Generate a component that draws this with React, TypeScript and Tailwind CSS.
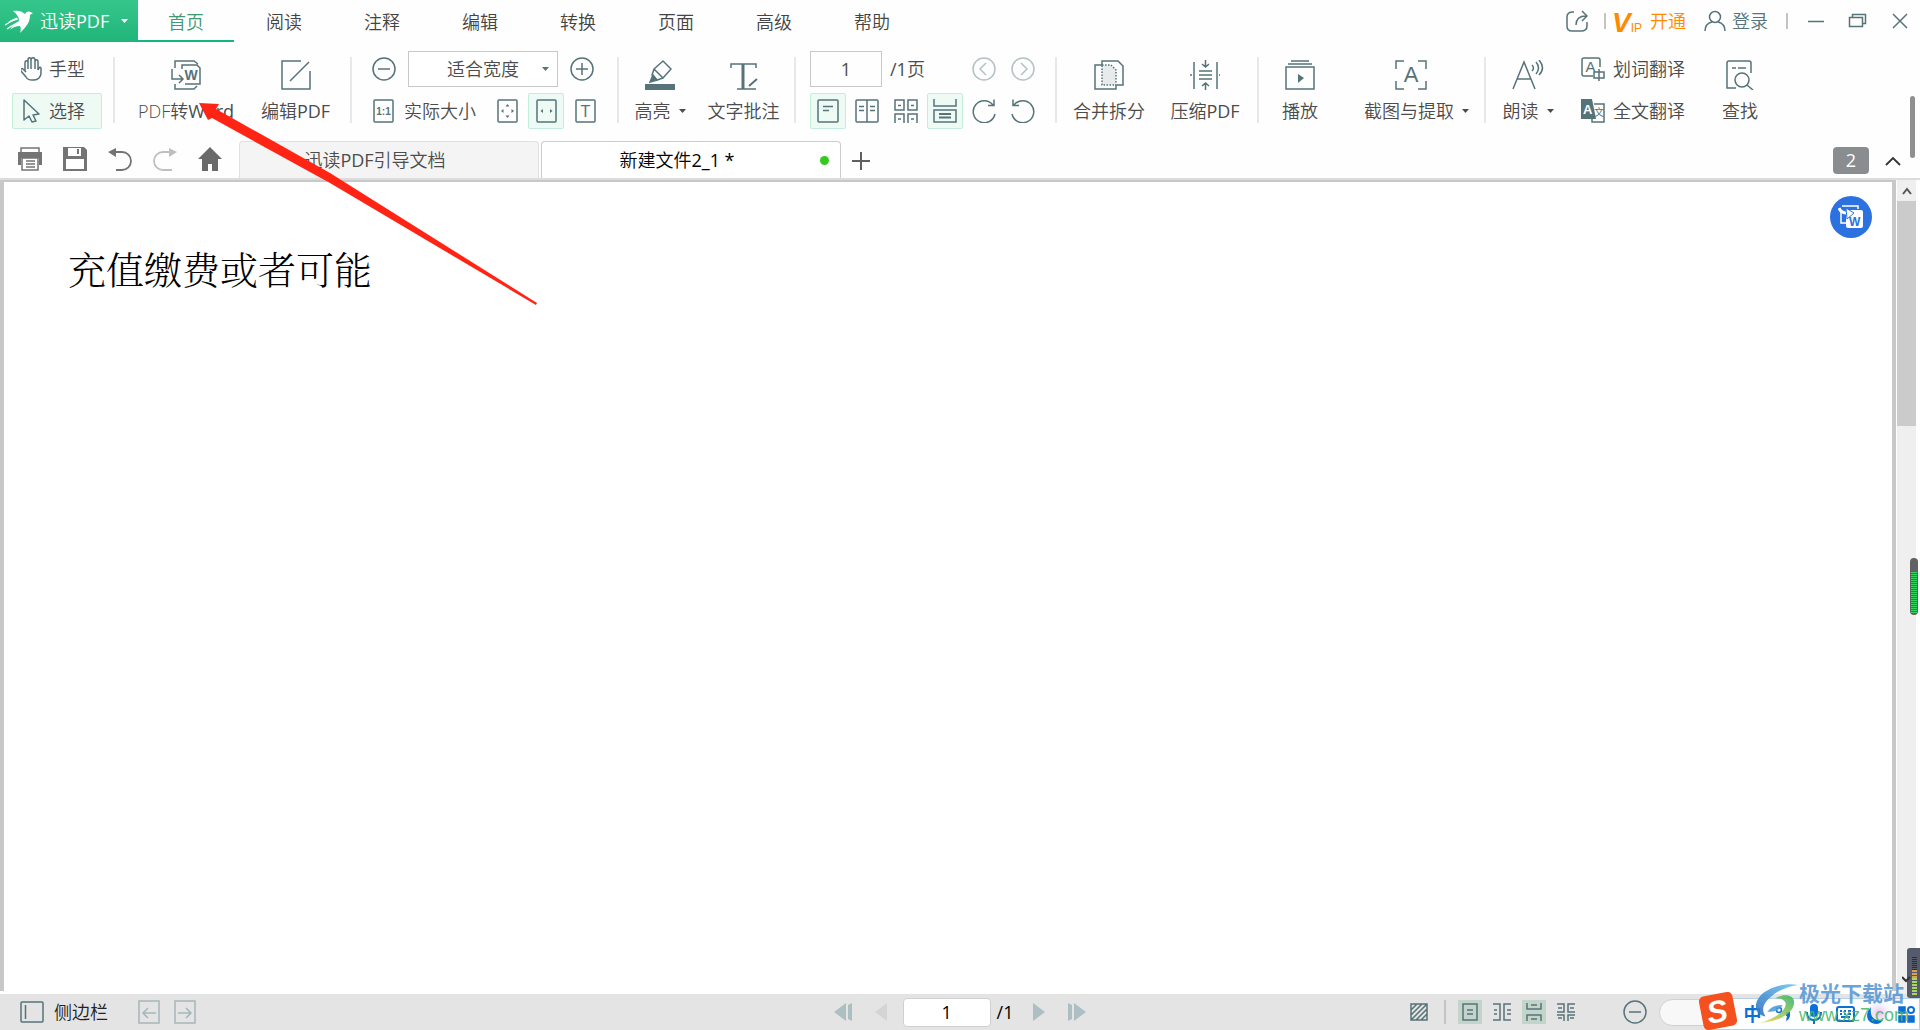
import React from 'react';
import clsx from 'clsx';

type IconProps = { w: number; h: number; className?: string; children: React.ReactNode };

const Icon = ({ w, h, className, children }: IconProps) => (
  <svg
    width={w}
    height={h}
    viewBox={`0 0 ${w} ${h}`}
    fill="none"
    stroke="currentColor"
    strokeWidth="1.5"
    className={clsx('shrink-0', className ?? 'text-[#56737a]')}
    aria-hidden="true"
  >
    {children}
  </svg>
);

type GlyphProps = { x: number; y: number; size: number; weight?: number; children: string };

// small letter inside an icon
const Glyph = ({ x, y, size, weight = 400, children }: GlyphProps) => (
  <text
    x={x}
    y={y}
    fontSize={size}
    fontWeight={weight}
    textAnchor="middle"
    fill="currentColor"
    stroke="none"
    fontFamily="'Liberation Sans', 'Noto Sans CJK SC', sans-serif"
  >
    {children}
  </text>
);

const Caret = () => (
  <svg width="7" height="4" viewBox="0 0 7 4" className="shrink-0" aria-hidden="true">
    <path d="M0 0h7L3.5 4z" fill="currentColor" />
  </svg>
);

// Latin runs need the regular weight to sit well beside the light CJK strokes
const Latin = ({ children }: { children: string }) => <span className="font-normal">{children}</span>;

const Separator = () => <div className="mt-[6px] h-[66px] w-[2px] shrink-0 bg-[#e8e8e8]" />;

const menuTabs = ['首页', '阅读', '注释', '编辑', '转换', '页面', '高级', '帮助'];

const TitleBar = () => (
  <header className="flex h-[42px] items-stretch">
    <button className="flex w-[138px] shrink-0 items-center bg-gradient-to-b from-[#35c68b] to-[#20b57a] pl-1 text-white">
      <svg width="30" height="24" viewBox="0 0 30 24" aria-hidden="true">
        <path
          d="M9 2c5-1 9 0 12 3 1-2 3-3 5-2l3 1-3 2c0 7-3 11-10 18 1-3 1-5 0-7-4 0-7 1-10 4 2-4 5-7 9-9 0-4-2-7-6-10z"
          fill="currentColor"
        />
        <path d="M1 16c5-3 8-5 13-6M3 20c4-3 6-4 10-6M5 13c3-2 5-3 8-4" stroke="currentColor" strokeWidth="1.2" fill="none" />
      </svg>
      <span className="ml-[6px]">迅读<Latin>PDF</Latin></span>
      <span className="ml-3">
        <Caret />
      </span>
    </button>
    <nav className="flex gap-[2px]">
      {menuTabs.map((tab, i) => (
        <button
          key={tab}
          className={clsx(
            'w-24 border-b-2 pt-1',
            i === 0 ? 'border-[#10b981] text-[#3f9a74]' : 'border-transparent text-[#444444]',
          )}
        >
          {tab}
        </button>
      ))}
    </nav>
    <div className="ml-auto flex items-center pr-3 text-[#56737a]">
      <button aria-label="分享" className="mr-4">
        <Icon w={22} h={22}>
          <path d="M8 2H7C3 2 1 4 1 7v9c0 3 2 5 5 5h9c4 0 6-2 6-5v-4" />
          <path d="M10 15c0-5 2-9 10-9M16 1l5 5-5 5" />
        </Icon>
      </button>
      <div className="h-4 w-[2px] bg-[#c4c4c4]" />
      <button className="ml-2 flex items-center gap-[10px] text-[#ff8a00]">
        <svg width="26" height="42" viewBox="0 0 26 42" fill="currentColor" className="overflow-visible" aria-hidden="true">
          <text x="-2" y="32" fontSize="28" fontWeight="700" fontStyle="italic" fontFamily="'Liberation Sans', sans-serif">
            V
            <tspan fontSize="12" fontStyle="normal" fontWeight="400">
              IP
            </tspan>
          </text>
        </svg>
        开通
      </button>
      <button className="ml-[18px] flex items-center gap-[6px]">
        <Icon w={22} h={22}>
          <circle cx="11" cy="7" r="5.5" />
          <path d="M1 21c0-5 3-8 7-9M21 21c0-5-3-8-7-9" />
        </Icon>
        登录
      </button>
      <div className="ml-[18px] h-4 w-[2px] bg-[#c4c4c4]" />
      <button aria-label="最小化" className="ml-5">
        <Icon w={16} h={18}>
          <path d="M0 9.5h16" />
        </Icon>
      </button>
      <button aria-label="还原" className="ml-6">
        <Icon w={20} h={18}>
          <path d="M1.500 5.500h13v9h-13zM4.500 5V2.500h13v9H15" />
        </Icon>
      </button>
      <button aria-label="关闭" className="ml-6">
        <Icon w={16} h={18}>
          <path d="M1 2l14 14M15 2L1 16" />
        </Icon>
      </button>
    </div>
  </header>
);

type BigButtonProps = { width: string; label: React.ReactNode; caret?: boolean; children: React.ReactNode };

const BigButton = ({ width, label, caret, children }: BigButtonProps) => (
  <button className={clsx('flex shrink-0 flex-col items-center gap-[9px] pt-[9px] whitespace-nowrap', width)}>
    {children}
    <span className="flex items-center gap-2 leading-6">
      <span>{label}</span>
      {caret && <Caret />}
    </span>
  </button>
);

type ToolProps = { label: string; active?: boolean; children: React.ReactNode };

const Tool = ({ label, active, children }: ToolProps) => (
  <button
    aria-label={label}
    className={clsx(
      'flex h-9 w-9 shrink-0 items-center justify-center rounded-xs border',
      active ? 'border-[#c5eddc] bg-[#edfbf4]' : 'border-transparent',
    )}
  >
    {children}
  </button>
);

const Ribbon = () => (
  <div className="flex h-[97px] shrink-0 items-start overflow-hidden pt-[9px] text-[#4c4c4c]">
    <div className="flex flex-col gap-[6px] pr-[11px] pl-3">
      <button className="flex h-9 w-[90px] items-center gap-[6px] border border-transparent pl-2">
        <Icon w={22} h={24}>
          <path d="M4 14V6c0-3 3-3 3 0v6V3c0-3 3-3 3 0v9V3c0-3 4-3 4 0v9V5c0-3 3-3 3 0v8c1-3 3-4 3-1v4c0 4-3 7-7 7h-2c-3 0-5-1-6-3l-5-6c-1-2 1-3 2-2l3 3" />
        </Icon>
        手型
      </button>
      <button className="flex h-9 w-[90px] items-center gap-[6px] rounded-xs border border-[#c5eddc] bg-[#edfbf4] pl-2">
        <Icon w={22} h={24}>
          <path d="M3 1l15 14-6 1 3 6-4 1-3-6-5 4z" strokeLinejoin="round" />
        </Icon>
        选择
      </button>
    </div>
    <Separator />

    <div className="flex px-2">
      <BigButton width="w-[126px]" label={<>PDF转<Latin>Word</Latin></>}>
        <Icon w={30} h={30}>
          <path d="M4 8V1h19l4 3M4 24v5h19l3-3M11 9V5h15l3 3v16H14M1 9v10h10M8 15l4 4-4 4" />
          <Glyph x={20} y={20} size={14} weight={700}>W</Glyph>
        </Icon>
      </BigButton>
      <BigButton width="w-[93px]" label={<>编辑<Latin>PDF</Latin></>}>
        <Icon w={30} h={30}>
          <path d="M20 1H1v28h28V11M9 21L28 2" />
        </Icon>
      </BigButton>
    </div>
    <Separator />

    <div className="flex flex-col gap-[6px] px-[14px]">
      <div className="flex gap-[6px]">
        <Tool label="缩小">
          <Icon w={24} h={24}>
            <circle cx="12" cy="12" r="11" />
            <path d="M6 12h12" />
          </Icon>
        </Tool>
        <div className="relative">
          <select aria-label="缩放" className="h-9 w-[150px] appearance-none border border-[#c8c8c8] bg-white text-center [text-align-last:center]">
            <option>适合宽度</option>
          </select>
          <span className="pointer-events-none absolute top-4 right-[9px] text-[#56737a]">
            <Caret />
          </span>
        </div>
        <Tool label="放大">
          <Icon w={24} h={24}>
            <circle cx="12" cy="12" r="11" />
            <path d="M6 12h12M12 6v12" />
          </Icon>
        </Tool>
      </div>
      <div className="flex gap-[3px]">
        <button className="flex h-9 w-[120px] items-center gap-[10px] pl-[7px] whitespace-nowrap">
          <Icon w={21} h={24}>
            <rect x="1" y="1" width="19" height="22" rx="1" />
            <Glyph x={10.5} y={16} size={10} weight={700}>1:1</Glyph>
          </Icon>
          实际大小
        </button>
        <Tool label="适合页面">
          <Icon w={21} h={24}>
            <rect x="1" y="1" width="19" height="22" rx="1" />
            <path d="M8.500 7.500l2-2.500 2 2.500zM8.500 16.500l2 2.500 2-2.500zM6.500 10L4 12l2.500 2zM14.500 10l2.500 2-2.500 2z" fill="currentColor" stroke="none" />
          </Icon>
        </Tool>
        <Tool label="适合宽度" active>
          <Icon w={21} h={24}>
            <rect x="1" y="1" width="19" height="22" rx="1" />
            <path d="M7 10l-2.500 2L7 14zM14 10l2.500 2-2.500 2z" fill="currentColor" stroke="none" />
          </Icon>
        </Tool>
        <Tool label="适合文本">
          <Icon w={21} h={24}>
            <rect x="1" y="1" width="19" height="22" rx="1" />
            <Glyph x={10.5} y={18} size={16}>T</Glyph>
          </Icon>
        </Tool>
      </div>
    </div>
    <Separator />

    <div className="flex gap-2 px-2">
      <BigButton width="w-[66px]" label="高亮" caret>
        <Icon w={30} h={30}>
          <path d="M18 1l8 8-8 9-6 2-5-5 2-6zM9 9l9 9" strokeLinejoin="round" />
          <path d="M8 15l4 5-7 2z" fill="currentColor" />
          <path d="M0 27h30" strokeWidth="6" />
        </Icon>
      </BigButton>
      <BigButton width="w-[85px]" label="文字批注">
        <Icon w={30} h={30}>
          <path d="M2 8V4h25v4M8 29h19" />
          <path d="M14 4v25" strokeWidth="3" />
          <path d="M20 26l8-7" strokeWidth="2" />
        </Icon>
      </BigButton>
    </div>
    <Separator />

    <div className="flex flex-col gap-[6px] px-[14px]">
      <div className="flex items-center gap-[3px]">
        <input aria-label="页码" defaultValue="1" className="h-9 w-[72px] border border-[#c8c8c8] text-center font-normal" />
        <span className="ml-[5px]"><Latin>/1</Latin>页</span>
        <div className="ml-auto flex gap-[3px]">
          <Tool label="上一页">
            <Icon w={24} h={24} className="text-[#b4c2c4]">
              <circle cx="12" cy="12" r="11" />
              <path d="M14 6l-6 6 6 6" />
            </Icon>
          </Tool>
          <Tool label="下一页">
            <Icon w={24} h={24} className="text-[#b4c2c4]">
              <circle cx="12" cy="12" r="11" />
              <path d="M10 6l6 6-6 6" />
            </Icon>
          </Tool>
        </div>
      </div>
      <div className="flex gap-[3px]">
        <Tool label="单页" active>
          <Icon w={22} h={24}>
            <rect x="1" y="1" width="20" height="22" rx="1" />
            <path d="M6 7.500h10M6 11.500h6" />
          </Icon>
        </Tool>
        <Tool label="双页">
          <Icon w={24} h={24}>
            <rect x="1" y="1" width="22" height="22" rx="1" />
            <path d="M12 1v22M4 7.500h5M4 11.500h5M15 7.500h5M15 11.500h5" />
          </Icon>
        </Tool>
        <Tool label="多页">
          <Icon w={24} h={24}>
            <path d="M1 1h9v10H1zM14 1h9v10h-9zM1 24v-9h9v9M14 24v-9h9v9M4 6.500h3M17 6.500h3M4 20h3M17 20h3" />
          </Icon>
        </Tool>
        <Tool label="连续" active>
          <Icon w={24} h={24}>
            <path d="M1 0v7h22V0M1 11h22v12H1z" />
            <path d="M6 15h12M6 18.500h12" strokeWidth="2" />
          </Icon>
        </Tool>
        <Tool label="顺时针旋转">
          <Icon w={24} h={24}>
            <path d="M21 6A11 11 0 1 0 23 15M16 6.500h6V0.500" />
          </Icon>
        </Tool>
        <Tool label="逆时针旋转">
          <Icon w={24} h={24}>
            <path d="M3 6A11 11 0 1 1 1 15M8 6.500H2V0.500" />
          </Icon>
        </Tool>
      </div>
    </div>
    <Separator />

    <div className="flex gap-2 px-2">
      <BigButton width="w-[88px]" label="合并拆分">
        <Icon w={30} h={30}>
          <path d="M8 5V1h16l5 5v19h-6M8 5H1v24h21v-4" />
          <path d="M8 5h9l5 5v15H8z" fill="#e7ebec" strokeDasharray="1.500 1.500" />
        </Icon>
      </BigButton>
      <BigButton width="w-[88px]" label={<>压缩<Latin>PDF</Latin></>}>
        <Icon w={30} h={30}>
          <path d="M4 2v27M27 2v27M9 11h13M9 15h13M9 19h13M15.500 0v7M12 4l3.500 3L19 4M15.500 30v-7M12 26l3.500-3 3.500 3M0 15h2M29 15h1" />
        </Icon>
      </BigButton>
    </div>
    <Separator />

    <div className="flex gap-6 px-2">
      <BigButton width="w-[66px]" label="播放">
        <Icon w={30} h={30}>
          <path d="M6 1h18M3 4h24M1 7h28v22H1z" />
          <path d="M13 14l6 4-6 5z" fill="currentColor" stroke="none" />
        </Icon>
      </BigButton>
      <BigButton width="w-[119px]" label="截图与提取" caret>
        <span className="pr-3">
          <Icon w={32} h={30}>
            <path d="M1 9V1h8M23 1h8v8M1 21v8h8M23 29h8v-8" />
            <Glyph x={16} y={22} size={22}>A</Glyph>
          </Icon>
        </span>
      </BigButton>
    </div>
    <Separator />

    <div className="flex gap-2 px-2">
      <BigButton width="w-[68px]" label="朗读" caret>
        <Icon w={32} h={30}>
          <path d="M1 29L12 2l11 27M5 19h14" />
          <path d="M20 5q3 3 0 6M24 2q5 6 0 12M27 0q7 8 0 15" />
        </Icon>
      </BigButton>
      <div className="flex flex-col gap-[6px] whitespace-nowrap">
        <button className="flex h-9 items-center gap-2 px-[11px]">
          <Icon w={24} h={24}>
            <path d="M19 10V3q0-2-2-2H3Q1 1 1 3v14q0 2 2 2h9" />
            <Glyph x={9.5} y={15} size={15}>A</Glyph>
            <path d="M13 15h10v6H13zM18 12v12" />
          </Icon>
          划词翻译
        </button>
        <button className="flex h-9 items-center gap-2 px-[11px]">
          <Icon w={24} h={24}>
            <path d="M0 0h11l4 20H0z" fill="currentColor" stroke="none" />
            <path d="M13 5h10v18H11v-3" />
            <text x="2" y="15" fontSize="13" fontWeight="700" fill="#ffffff" stroke="none" fontFamily="'Liberation Sans', sans-serif">A</text>
            <Glyph x={18} y={17} size={10}>文</Glyph>
          </Icon>
          全文翻译
        </button>
      </div>
      <BigButton width="w-[72px]" label="查找">
        <Icon w={28} h={30}>
          <path d="M10 28H1V3q0-2 2-2h20q2 0 2 2v10M6 8h4M12 8h8" />
          <circle cx="16" cy="20" r="7" />
          <path d="M21 25l6 5" />
        </Icon>
      </BigButton>
    </div>
  </div>
);

const TabRow = () => (
  <div className="flex h-[39px] shrink-0 items-end text-[#666666]">
    <div className="flex h-full items-center gap-[21px] pl-[18px]">
      <button aria-label="打印">
        <Icon w={24} h={24} className="text-[#747474]">
          <path d="M3 5V1h18v4" />
          <path d="M0 5h24v13h-3v-7H3v7H0z" fill="currentColor" stroke="none" />
          <path d="M4 11h16v12H4zM8 14h9M8 17h9M8 20h9" />
        </Icon>
      </button>
      <button aria-label="保存">
        <Icon w={24} h={24} className="text-[#747474]">
          <path d="M0 0h21l3 3v21H0z" fill="currentColor" stroke="none" />
          <path d="M5 1h13v8H5zM3 12h18v10H3z" fill="#ffffff" stroke="none" />
          <path d="M15 2v5" strokeWidth="2" />
        </Icon>
      </button>
      <button aria-label="撤销">
        <Icon w={24} h={24} className="text-[#747474]">
          <path d="M6 5h8a9 9 0 0 1 0 18H8" strokeWidth="1.800" />
          <path d="M0 5l8-4v9z" fill="currentColor" stroke="none" />
        </Icon>
      </button>
      <button aria-label="重做">
        <Icon w={24} h={24} className="text-[#bfbfbf]">
          <path d="M18 5h-8a9 9 0 0 0 0 18h9" strokeWidth="1.800" />
          <path d="M24 5l-8-4v9z" fill="currentColor" stroke="none" />
        </Icon>
      </button>
      <button aria-label="主页">
        <Icon w={24} h={24} className="text-[#6a6a6a]">
          <path d="M12 0l12 12h-4v12h-6v-7h-4v7H4V12H0z" fill="currentColor" stroke="none" />
        </Icon>
      </button>
    </div>
    <div className="ml-[17px] flex h-[37px] gap-[2px]">
      <button className="w-[300px] rounded-t-sm border border-b-0 border-[#e0e0e0] bg-[#f4f4f4] pr-7 text-[#4c4c4c]">
        迅读<Latin>PDF</Latin>引导文档
      </button>
      <button className="relative w-[300px] rounded-t-sm border border-b-0 border-[#cccccc] bg-white pr-7 text-black">
        新建文件<Latin>2_1 *</Latin>
        <span className="absolute top-[14px] right-[11px] h-[9px] w-[9px] rounded-full bg-[#35c81f]" />
      </button>
    </div>
    <button aria-label="新建标签" className="mb-[7px] ml-[11px]">
      <Icon w={18} h={20} className="text-[#5f5f5f]">
        <path d="M0 10h18M9 1v18" strokeWidth="2" />
      </Icon>
    </button>
    <div className="mb-1 ml-auto flex items-center gap-4 pr-[19px]">
      <button className="h-[27px] w-9 rounded-sm bg-[#8a8d8f] leading-[27px] font-normal text-white">2</button>
      <button aria-label="收起">
        <Icon w={16} h={10} className="text-[#333333]">
          <path d="M1 9l7-7 7 7" strokeWidth="1.800" />
        </Icon>
      </button>
    </div>
  </div>
);

const DocumentArea = () => (
  <div className="flex min-h-0 grow border-t-2 border-[#dcdcdc]">
    <main className="relative mb-[3px] grow border-4 border-t-2 border-b-0 border-[#c8c8c8] bg-white pt-[61px] pl-16">
      <p className="font-['Liberation_Serif','Noto_Serif_CJK_SC','Noto_Sans_CJK_SC',serif] text-[38px] leading-[56px] text-black">
        充值缴费或者可能
      </p>
      <button aria-label="转Word" className="absolute top-[14px] right-[20px] flex h-[42px] w-[42px] items-center justify-center rounded-full bg-[#2b72e0]">
        <Icon w={26} h={26} className="text-white">
          <path d="M4 2h16v3M3 8v11h5" />
          <rect x="8" y="6" width="17" height="18" rx="2" fill="currentColor" stroke="none" />
          <path d="M1 4q2 5 8 5" strokeWidth="3" />
          <path d="M8 4l8 5-7 6z" fill="currentColor" stroke="#2b72e0" strokeWidth="1" />
          <text x="11" y="22" fontSize="12" fontWeight="700" fill="#2b72e0" stroke="none" fontFamily="'Liberation Sans', sans-serif">W</text>
        </Icon>
      </button>
    </main>
    <div className="mr-1 ml-px flex w-[19px] shrink-0 flex-col bg-[#efefef]">
      <button aria-label="向上滚动" className="flex h-[21px] items-center justify-center">
        <Icon w={10} h={8} className="text-[#555555]">
          <path d="M1 7l4-5 4 5" strokeWidth="2" />
        </Icon>
      </button>
      <div className="h-[225px] bg-[#cbcbcb]" />
    </div>
  </div>
);

const StatusBar = () => (
  <footer className="flex h-9 shrink-0 items-center bg-[#e4e4e4] text-[#222222]">
    <div className="flex flex-1 items-center">
      <button className="ml-5 flex items-center gap-[10px]">
        <Icon w={24} h={22}>
          <rect x="1" y="1" width="22" height="20" rx="1" />
          <path d="M5.500 4v14" />
        </Icon>
        侧边栏
      </button>
      <button aria-label="后退" className="ml-[30px]">
        <Icon w={22} h={24} className="text-[#a5b5b8]">
          <path d="M1 1h20v22H1zM5 13h13M10 8l-5 5 5 5" />
        </Icon>
      </button>
      <button aria-label="前进" className="ml-[14px]">
        <Icon w={22} h={24} className="text-[#a5b5b8]">
          <path d="M1 1h20v22H1zM4 13h13M12 8l5 5-5 5" />
        </Icon>
      </button>
    </div>
    <div className="flex items-center text-black">
      <button aria-label="首页">
        <Icon w={19} h={18} className="text-[#adbfc3]">
          <path d="M0 9L12 0v18zM14 2l4-2v18l-4-2z" fill="currentColor" stroke="none" />
        </Icon>
      </button>
      <button aria-label="上一页" className="ml-[22px]">
        <Icon w={12} h={18} className="text-[#d4d4d4]">
          <path d="M0 9L12 0v18z" fill="currentColor" stroke="none" />
        </Icon>
      </button>
      <input aria-label="当前页" defaultValue="1" className="ml-4 h-[29px] w-[88px] rounded-sm border border-[#d0d0d0] bg-white text-center font-normal" />
      <span className="ml-[6px] font-normal">/1</span>
      <button aria-label="下一页" className="ml-5">
        <Icon w={12} h={18} className="text-[#adbfc3]">
          <path d="M12 9L0 0v18z" fill="currentColor" stroke="none" />
        </Icon>
      </button>
      <button aria-label="末页" className="ml-[22px]">
        <Icon w={19} h={18} className="text-[#adbfc3]">
          <path d="M19 9L7 0v18zM5 2L1 0v18l4-2z" fill="currentColor" stroke="none" />
        </Icon>
      </button>
    </div>
    <div className="flex flex-1 items-center justify-end">
      <button aria-label="背景">
        <Icon w={18} h={18}>
          <path d="M1 1h16v16H1zM1 7l6-6M1 12L12 1M1 17L17 1M6 17L17 6M11 17l6-6" />
        </Icon>
      </button>
      <div className="mr-3 ml-4 h-6 w-[2px] bg-[#c4c4c4]" />
      <div className="flex gap-2">
        <button aria-label="单页" className="flex h-6 w-6 items-center justify-center bg-[#c3d5cb]">
          <Icon w={16} h={18}>
            <path d="M1 1h14v16H1zM5 7h6M5 11h6" />
          </Icon>
        </button>
        <button aria-label="双页" className="flex h-6 w-6 items-center justify-center">
          <Icon w={18} h={18}>
            <path d="M0 1h7v16H0M18 1h-7v16h7M1 7h3M1 11h3M14 7h4M14 11h4" />
          </Icon>
        </button>
        <button aria-label="连续" className="flex h-6 w-6 items-center justify-center bg-[#c3d5cb]">
          <Icon w={16} h={18}>
            <path d="M1 0v6h14V0M1 18v-6h14v6M5 2h6M5 16h6" />
          </Icon>
        </button>
        <button aria-label="双页连续" className="flex h-6 w-6 items-center justify-center">
          <Icon w={18} h={18}>
            <path d="M0 1h7v8H0M18 9h-7V1h7M0 12h7v6M18 12h-7v6M1 5h4M13 5h4M1 15h4M13 15h4" />
          </Icon>
        </button>
      </div>
      <button aria-label="缩小" className="ml-[45px]">
        <Icon w={24} h={24}>
          <circle cx="12" cy="12" r="11" />
          <path d="M6 12h12" />
        </Icon>
      </button>
      <input
        type="range"
        aria-label="缩放比例"
        className="ml-3 h-[27px] w-[261px] shrink-0 appearance-none rounded-full border border-[#d0d0d0] bg-[#f8f8f8] [&::-webkit-slider-thumb]:appearance-none"
      />
    </div>
  </footer>
);

const InputMethodBar = () => (
  <div className="absolute right-0 bottom-0 flex h-8 w-[212px] items-center gap-3 border border-[#b9cfe6] bg-white pl-[34px] text-[#0b6fd8]">
    <svg width="42" height="38" viewBox="0 0 42 38" className="absolute -top-[7px] -left-3" aria-hidden="true">
      <g transform="rotate(-11 21 19)">
        <rect x="4" y="2" width="34" height="34" rx="5" fill="#f4511e" />
        <text x="20" y="30" fontSize="31" fontWeight="700" fontStyle="italic" textAnchor="middle" fill="#ffffff" fontFamily="'Liberation Sans', sans-serif">
          S
        </text>
      </g>
    </svg>
    <button className="w-[19px] shrink-0 font-bold">中</button>
    <Icon w={19} h={18} className="text-[#0b6fd8]">
      <circle cx="5" cy="5" r="2.500" />
      <path d="M12 7h4v4q-1 4-4 5l1-5h-1z" fill="currentColor" stroke="none" />
    </Icon>
    <Icon w={19} h={20} className="text-[#0b6fd8]">
      <rect x="5" y="0" width="8" height="13" rx="4" fill="currentColor" stroke="none" />
      <path d="M2 8q0 8 7 8t7-8M9 16v4" strokeWidth="2" />
    </Icon>
    <Icon w={19} h={16} className="text-[#0b6fd8]">
      <rect x="1" y="1" width="17" height="14" rx="2" strokeWidth="2" />
      <path d="M4 5h2M8 5h2M12 5h3M4 8h2M8 8h2M12 8h3M5 11h9" strokeWidth="2" />
    </Icon>
    <svg width="19" height="30" viewBox="5 0 19 30" className="shrink-0 overflow-visible" aria-hidden="true">
      <defs>
        <radialGradient id="halo">
          <stop offset="0" stopColor="#f3b6f0" />
          <stop offset="1" stopColor="#dff5ff" stopOpacity="0" />
        </radialGradient>
      </defs>
      <circle cx="17" cy="14" r="14" fill="url(#halo)" />
      <path d="M9 8q-2 15 12 13-4 6-11 3T6 12z" fill="#0b6fd8" />
    </svg>
    <Icon w={17} h={17} className="text-[#0b6fd8]">
      <path d="M1 1h6v6H1zM1 10h6v6H1zM10 10h6v6h-6z" fill="currentColor" />
      <circle cx="13" cy="4" r="3" strokeWidth="2" />
    </Icon>
  </div>
);

const Watermark = () => (
  <div className="pointer-events-none absolute right-[11px] bottom-[5px] flex items-end">
    <svg width="44" height="42" viewBox="0 0 46 44" className="opacity-90" aria-hidden="true">
      <defs>
        <linearGradient id="swirl" x1="0" y1="1" x2="1" y2="0">
          <stop offset="0" stopColor="#2f6fc0" />
          <stop offset="1" stopColor="#6fc8f2" />
        </linearGradient>
        <linearGradient id="leaf" x1="0" y1="1" x2="1" y2="0">
          <stop offset="0" stopColor="#f4d94a" />
          <stop offset="1" stopColor="#38b56c" />
        </linearGradient>
      </defs>
      <path d="M45 2C26-1 4 8 1 22c-1 7 3 12 10 13-5-7-2-14 5-20 7-7 17-11 29-13z" fill="url(#swirl)" />
      <path d="M21 16c10-6 20-3 20 4 0 11-14 20-36 22 13-4 26-11 27-19 1-5-5-7-11-7z" fill="url(#leaf)" />
      <path d="M13 30q5-7 16-7-5 8-16 7z" fill="#4f9ddc" />
    </svg>
    <div className="flex flex-col items-start leading-none">
      <span className="text-[21px] leading-6 font-bold text-[#4f93d2]/85">极光下载站</span>
      <span className="font-['Liberation_Sans',sans-serif] text-[18px] leading-[20px] font-normal text-[#45b86a]/90">www.xz7.com</span>
    </div>
  </div>
);

const SideWidgets = () => (
  <>
    <div className="absolute top-24 right-[5px] h-[62px] w-[5px] rounded-sm bg-[#8f8f8f]" />
    <svg width="8" height="57" viewBox="0 0 8 57" className="absolute top-[558px] right-[2px]" aria-hidden="true">
      <rect width="8" height="57" rx="4" fill="#616161" />
      <path d="M4 14v41" stroke="#2bd65a" strokeWidth="6" strokeDasharray="1 1" />
    </svg>
    <svg width="18" height="50" viewBox="0 0 18 50" className="absolute right-0 bottom-8" aria-hidden="true">
      <rect x="5" y="0" width="16" height="50" rx="3" fill="#565b6b" />
      <path d="M12.500 9v13" stroke="#2b2e38" strokeWidth="5" strokeDasharray="1 1" />
      <path d="M12.500 22v8" stroke="#dca04e" strokeWidth="5" strokeDasharray="2 1" />
      <path d="M12.500 30v18" stroke="#a9d65c" strokeWidth="5" strokeDasharray="2 1" />
      <path d="M0 29l4 4 4-4" stroke="#333333" strokeWidth="2" fill="none" />
    </svg>
  </>
);

// hand-drawn pointer towards the "PDF转Word" button
const RedArrow = () => (
  <svg width="340" height="204" viewBox="0 0 340 204" className="pointer-events-none absolute top-[102px] left-[198px]" aria-hidden="true">
    <path d="M1 1l20 1-3 5 114 64 207 130-1 2-206-122L14 16l-4 2z" fill="#ff2413" />
  </svg>
);

const App = () => (
  <div className="relative flex h-screen flex-col overflow-hidden bg-[#fefefe] font-['Open_Sans','Noto_Sans_CJK_SC',sans-serif] text-[18px] leading-6 font-[350]">
    <TitleBar />
    <Ribbon />
    <TabRow />
    <DocumentArea />
    <StatusBar />
    <SideWidgets />
    <InputMethodBar />
    <Watermark />
    <RedArrow />
  </div>
);

export default App;
